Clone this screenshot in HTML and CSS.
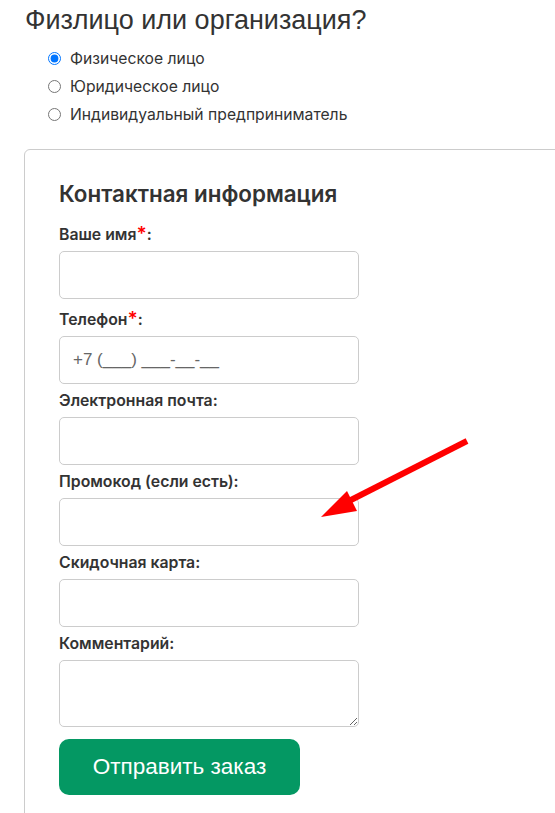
FILE: index.html
```html
<!DOCTYPE html>
<html lang="ru">
<head>
<meta charset="utf-8">
<link rel="stylesheet" href="styles.css">
</head>
<body>
<div class="page">
  <h2 class="title">Физлицо или организация?</h2>
  <div class="radios">
    <label class="radio"><input type="radio" name="t" checked> Физическое лицо</label>
    <label class="radio"><input type="radio" name="t"> Юридическое лицо</label>
    <label class="radio"><input type="radio" name="t"> Индивидуальный предприниматель</label>
  </div>
  <div class="card">
    <h3 class="card-title">Контактная информация</h3>
    <div class="field">
      <label class="lbl">Ваше имя<span class="req">*</span>:</label>
      <input class="inp" type="text">
    </div>
    <div class="field">
      <label class="lbl">Телефон<span class="req">*</span>:</label>
      <input class="inp" type="text" placeholder="+7 (___) ___-__-__">
    </div>
    <div class="field">
      <label class="lbl">Электронная почта:</label>
      <input class="inp" type="text">
    </div>
    <div class="field">
      <label class="lbl">Промокод (если есть):</label>
      <input class="inp" type="text">
    </div>
    <div class="field">
      <label class="lbl">Скидочная карта:</label>
      <input class="inp" type="text">
    </div>
    <div class="field">
      <label class="lbl">Комментарий:</label>
      <textarea class="inp area"></textarea>
    </div>
    <button class="btn">Отправить заказ</button>
  </div>
</div>
<svg class="arrow" width="555" height="813" viewBox="0 0 555 813">
  <line x1="467" y1="441" x2="345" y2="503" stroke="#ff0000" stroke-width="6"/>
  <polygon points="321,517 347,491 357,511" fill="#ff0000"/>
</svg>
</body>
</html>
```
FILE: styles.css
```css
html { overflow: hidden; }
body {
  margin: 0;
  font-family: "Liberation Sans", Arial, sans-serif;
  color: #333;
  background: #fff;
}
.page {
  padding: 4px 0 0 24px;
}
.title {
  margin: 0 0 0 1px;
  font-size: 27px;
  font-weight: normal;
  line-height: 32px;
  color: #333;
}
.radios {
  display: flex;
  flex-direction: column;
  gap: 9px;
  margin: 13px 0 0 24px;
}
.radio {
  display: flex;
  align-items: center;
  font-family: Inter, "Liberation Sans", sans-serif;
  font-size: 15.7px;
  line-height: 19px;
  color: #333;
}
.radio input {
  margin: 0 9px 0 0;
  width: 13px;
  height: 13px;
}
.card {
  margin-top: 25px;
  width: 600px;
  border: 1px solid #ccc;
  border-radius: 6px;
  padding: 31px 0 40px 34px;
}
.card-title {
  margin: 0 0 18px 0;
  font-family: Inter, "Liberation Sans", sans-serif;
  font-size: 22.4px;
  line-height: 26px;
  font-weight: 600;
  color: #333;
}
.field {
  display: flex;
  flex-direction: column;
  margin-bottom: 8px;
}
.field:first-of-type { margin-bottom: 11px; }
.lbl {
  font-family: Inter, "Liberation Sans", sans-serif;
  font-size: 15.8px;
  font-weight: 600;
  line-height: 17px;
  margin-bottom: 8px;
  color: #333;
}
.req {
  color: #ff0000;
  font-size: 19px;
  line-height: 17px;
}
.inp {
  box-sizing: border-box;
  width: 300px;
  height: 48px;
  border: 1px solid #ccc;
  border-radius: 5px;
  padding: 0 13px;
  font-family: "Liberation Sans", Arial, sans-serif;
  font-size: 17px;
  color: #333;
  background: #fff;
  outline: none;
}
.inp::placeholder { color: #666; }
.area {
  height: 67px;
  resize: vertical;
}
.btn {
  margin-top: 4px;
  width: 241px;
  height: 56px;
  border: none;
  border-radius: 10px;
  background: #049863;
  color: #fff;
  font-family: "Liberation Sans", Arial, sans-serif;
  font-size: 22.5px;
}
.arrow {
  position: absolute;
  left: 0;
  top: 0;
  pointer-events: none;
}
```
